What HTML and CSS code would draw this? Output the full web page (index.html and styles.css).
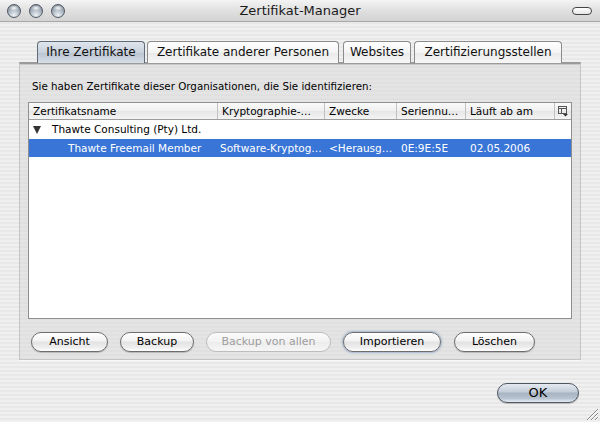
FILE: index.html
```html
<!DOCTYPE html>
<html lang="de">
<head>
<meta charset="utf-8">
<title>Zertifikat-Manager</title>
<link rel="stylesheet" href="styles.css">
</head>
<body>
<div class="window">
  <div class="titlebar">
    <div class="lights">
      <span class="light"></span><span class="light"></span><span class="light"></span>
    </div>
    <div class="title">Zertifikat-Manager</div>
    <span class="pill"></span>
  </div>
  <div class="tabs">
    <div class="tab tab-1 selected">Ihre Zertifikate</div>
    <div class="tab tab-2">Zertifikate anderer Personen</div>
    <div class="tab tab-3">Websites</div>
    <div class="tab tab-4">Zertifizierungsstellen</div>
  </div>
  <div class="groupbox">
    <div class="intro">Sie haben Zertifikate dieser Organisationen, die Sie identifizieren:</div>
    <div class="table">
      <div class="row header">
        <div class="cell">Zertifikatsname</div>
        <div class="cell">Kryptographie-…</div>
        <div class="cell">Zwecke</div>
        <div class="cell">Seriennu…</div>
        <div class="cell">Läuft ab am</div>
        <div class="cell picker">
          <svg width="11" height="11" viewBox="0 0 11 11">
            <rect x="0.5" y="0.5" width="8" height="7" fill="none" stroke="#555"/>
            <line x1="0.5" y1="2.5" x2="8.5" y2="2.5" stroke="#555"/>
            <line x1="3.5" y1="2.5" x2="3.5" y2="7.5" stroke="#555"/>
            <path d="M5 8 L10 8 L7.5 10.5 Z" fill="#333"/>
          </svg>
        </div>
      </div>
      <div class="row group">
        <div class="cell span"><span class="tri"></span>Thawte Consulting (Pty) Ltd.</div>
      </div>
      <div class="row item selected">
        <div class="cell indent">Thawte Freemail Member</div>
        <div class="cell">Software-Kryptog…</div>
        <div class="cell">&lt;Herausg…</div>
        <div class="cell">0E:9E:5E</div>
        <div class="cell">02.05.2006</div>
        <div class="cell"></div>
      </div>
    </div>
    <div class="buttons">
      <button class="btn b-ansicht">Ansicht</button>
      <button class="btn b-backup">Backup</button>
      <button class="btn b-all" disabled>Backup von allen</button>
      <button class="btn b-import focus">Importieren</button>
      <button class="btn b-loeschen">Löschen</button>
    </div>
  </div>
  <div class="footer">
    <button class="btn ok">OK</button>
  </div>
  <svg class="grip" width="14" height="14" viewBox="0 0 14 14">
    <path d="M2 13 L13 2 M6 13 L13 6 M10 13 L13 10" stroke="#8a8a8a" stroke-width="1"/>
    <path d="M3 13 L13 3 M7 13 L13 7 M11 13 L13 11" stroke="#fff" stroke-width="1"/>
  </svg>
</div>
</body>
</html>
```
FILE: styles.css
```css
html, body {
  margin: 0;
  padding: 0;
}
body {
  width: 600px;
  height: 422px;
  overflow: hidden;
  font-family: "DejaVu Sans", "Noto Sans", sans-serif;
  color: #000;
}
.window {
  position: relative;
  width: 600px;
  height: 422px;
  background: repeating-linear-gradient(to bottom, #f0f0f0 0, #f0f0f0 2px, #e8e8e8 2px, #e8e8e8 4px);
  display: flex;
  flex-direction: column;
}
.titlebar {
  height: 22px;
  box-sizing: border-box;
  border-bottom: 1px solid #a9a9a9;
  background: linear-gradient(to bottom, #f4f4f4, #e0e0e0 50%, #d3d3d3);
  display: flex;
  align-items: center;
  position: relative;
}
.lights {
  display: flex;
  gap: 8px;
  padding-left: 7px;
}
.light {
  width: 14px;
  height: 14px;
  box-sizing: border-box;
  border-radius: 50%;
  border: 1px solid #4f5761;
  background:
    radial-gradient(ellipse 5px 3px at 50% 25%, rgba(255,255,255,0.95), rgba(255,255,255,0) 100%),
    radial-gradient(circle at 50% 85%, #eef2f6 0, #a3aebb 55%, #6f7a87 100%);
}
.title {
  position: absolute;
  left: 0;
  right: 0;
  text-align: center;
  font-size: 13px;
  color: #1a1a1a;
  top: 3px;
}
.pill {
  position: absolute;
  right: 8px;
  top: 7px;
  width: 20px;
  height: 8px;
  box-sizing: border-box;
  border: 1.5px solid #444;
  border-radius: 5px;
  background: linear-gradient(#fff, #e6e6e6);
}
.tabs {
  display: flex;
  padding-left: 37px;
  margin-top: 19px;
  height: 22px;
  position: relative;
  z-index: 2;
}
.tab {
  box-sizing: border-box;
  height: 22px;
  border: 1px solid #8b8b8b;
  border-bottom: none;
  border-radius: 4px 4px 0 0;
  background: linear-gradient(to bottom, #ffffff, #f4f4f4 50%, #e9e9e9 51%, #f7f7f7);
  font-size: 12px;
  line-height: 21px;
  text-align: center;
  color: #111;
  white-space: nowrap;
}
.tab.selected {
  background: linear-gradient(to bottom, #dfe5ec, #c8d1dc 50%, #b9c4d1 51%, #d6dee8);
  border-color: #5f6b78;
}
.tab-1 { width: 108px; }
.tab-2 { width: 192px; margin-left: 2px; }
.tab-3 { width: 68px; margin-left: 4px; }
.tab-4 { width: 148px; margin-left: 3px; }
.groupbox {
  margin: -1px 19px 0 19px;
  height: 298px;
  box-sizing: border-box;
  border: 1px solid #c4c4c4;
  border-top: 2px solid #9a9a9a;
  box-shadow: 0 1px 0 #f8f8f8, inset 0 1px 0 #c8c8c8;
  background: repeating-linear-gradient(to bottom, #e4e4e4 0, #e4e4e4 2px, #e0e0e0 2px, #e0e0e0 4px);
  padding: 14px 8px 0 8px;
  display: flex;
  flex-direction: column;
}
.intro {
  font-size: 10.3px;
  line-height: 16px;
  padding-left: 4px;
  height: 16px;
  white-space: nowrap;
  margin-bottom: 8px;
}
.table {
  height: 217px;
  flex: none;
  box-sizing: border-box;
  border: 1px solid #8f8f8f;
  background: #fff;
  font-size: 10.5px;
}
.row {
  display: grid;
  grid-template-columns: 189px 107px 72px 69px 89px 16px;
  height: 18px;
  line-height: 18px;
}
.row.header {
  height: 16px;
  line-height: 16px;
  background: linear-gradient(to bottom, #fbfbfb, #efefef 50%, #e6e6e6 51%, #f4f4f4);
  border-bottom: 1px solid #9c9c9c;
}
.header .cell {
  border-right: 1px solid #c2c2c2;
  padding-left: 4px;
}
.header .cell.picker {
  border-right: none;
  padding-left: 3px;
  display: flex;
  align-items: center;
}
.cell {
  white-space: nowrap;
  overflow: hidden;
  padding-left: 4px;
}
.row.group {
  height: 19px;
  line-height: 19px;
}
.group .span {
  grid-column: 1 / -1;
  display: flex;
  align-items: center;
}
.tri {
  width: 0;
  height: 0;
  border-left: 4.5px solid transparent;
  border-right: 4.5px solid transparent;
  border-top: 8px solid #333;
  margin-right: 11px;
}
.row.selected {
  background: #3875d7;
  color: #fff;
}
.indent {
  padding-left: 39px;
}
.row.item .cell:nth-child(2) { padding-left: 2px; }
.buttons {
  display: flex;
  margin-top: 13px;
  padding-left: 3px;
}
.btn {
  font-family: "DejaVu Sans", "Noto Sans", sans-serif;
  font-size: 11px;
  height: 20px;
  box-sizing: border-box;
  border: 1px solid #6d6d6d;
  border-radius: 10px;
  background: linear-gradient(to bottom, #ffffff 0, #f2f2f2 45%, #e2e2e2 50%, #eeeeee 80%, #ffffff 100%);
  box-shadow: 0 1px 1px rgba(0,0,0,0.2);
  color: #000;
  padding: 0;
  line-height: 18px;
}
.btn:disabled {
  color: #9d9d9d;
  border-color: #bdbdbd;
  background: linear-gradient(to bottom, #fbfbfb, #f2f2f2 50%, #ececec 51%, #f6f6f6);
  box-shadow: none;
}
.b-ansicht { width: 77px; }
.b-backup { width: 74px; margin-left: 12px; }
.b-all { width: 125px; margin-left: 12px; }
.b-import { width: 98px; margin-left: 12px; box-shadow: 0 0 2px 1px rgba(120,150,190,0.6); }
.b-loeschen { width: 81px; margin-left: 13px; }
.footer {
  display: flex;
  justify-content: flex-end;
  padding-right: 21px;
  margin-top: 23px;
}
.btn.ok {
  width: 82px;
  height: 20px;
  font-size: 13px;
  border-color: #4f5863;
  background: linear-gradient(to bottom, #e4eaf1 0, #c3ccd7 45%, #a7b3c2 50%, #b8c3d0 80%, #e6ecf2 100%);
}
.grip {
  position: absolute;
  right: 1px;
  bottom: 1px;
}
```
